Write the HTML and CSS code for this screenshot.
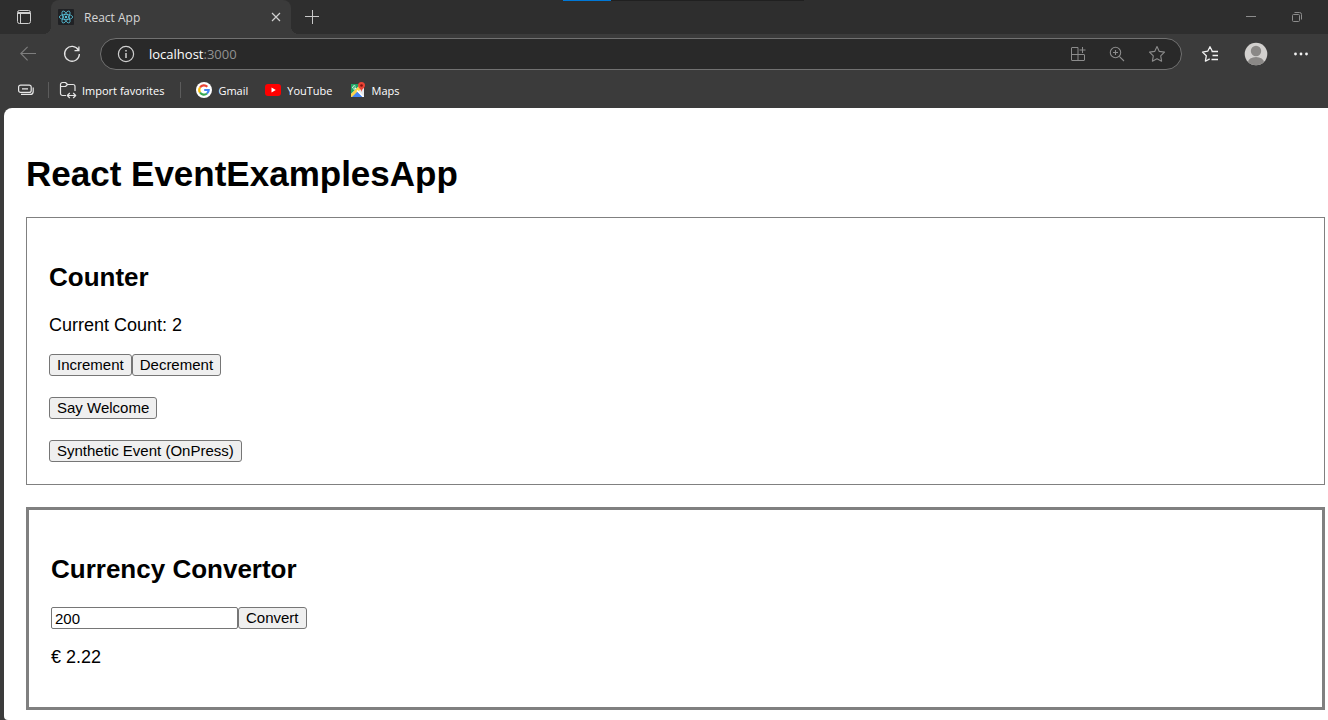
FILE: index.html
```html
<!DOCTYPE html>
<html lang="en">
<head>
<meta charset="utf-8">
<title>React App</title>
<link rel="stylesheet" href="styles.css">
</head>
<body>
<header class="browser">
  <div class="tabstrip">
    <div class="progress"><div class="progress-bar"></div></div>
    <button class="icon-btn tab-actions" aria-label="Tab actions">
      <svg width="16" height="16" viewBox="0 0 16 16" fill="none" stroke="#d0d0d0"><rect x="1.5" y="1.5" width="13" height="13" rx="2"/><path d="M2 3.5h12M2 4.500h12M4.500 5v9"/></svg>
    </button>
    <div class="tab">
      <svg class="favicon" width="16" height="16" viewBox="0 0 16 16" fill="none" stroke="#58c4dc" stroke-width="0.8"><rect width="16" height="16" rx="1" fill="#202124" stroke="none"/><ellipse cx="8" cy="8" rx="6.7" ry="2.6"/><ellipse cx="8" cy="8" rx="6.7" ry="2.6" transform="rotate(60 8 8)"/><ellipse cx="8" cy="8" rx="6.7" ry="2.6" transform="rotate(120 8 8)"/><circle cx="8" cy="8" r="1.2" fill="#58c4dc" stroke="none"/></svg>
      <span class="tab-title">React App</span>
      <button class="icon-btn" aria-label="Close tab">
        <svg width="10" height="10" viewBox="0 0 10 10" fill="none" stroke="#d0d0d0" stroke-width="1.2"><path d="M1 1l8 8M9 1L1 9"/></svg>
      </button>
    </div>
    <button class="icon-btn new-tab" aria-label="New tab">
      <svg width="14" height="14" viewBox="0 0 14 14" fill="none" stroke="#c8c8c8"><path d="M7.5 0v14M0 6.5h14"/></svg>
    </button>
    <div class="window-controls">
      <button class="icon-btn" aria-label="Minimize">
        <svg width="10" height="10" viewBox="0 0 10 10" fill="none" stroke="#8c8c8c"><path d="M0 4.5h10"/></svg>
      </button>
      <button class="icon-btn" aria-label="Restore">
        <svg width="10" height="10" viewBox="0 0 10 10" fill="none" stroke="#8c8c8c"><rect x=".5" y="2.5" width="7" height="7" rx="1"/><path d="M2.5.5h5a2 2 0 0 1 2 2v5"/></svg>
      </button>
    </div>
  </div>

  <div class="toolbar">
    <button class="icon-btn back" aria-label="Back">
      <svg width="16" height="16" viewBox="0 0 16 16" fill="none" stroke="#7e7e7e" stroke-width="1.1"><path d="M16 7.5H.8M7.6.8L.8 7.5l6.8 6.8"/></svg>
    </button>
    <button class="icon-btn reload" aria-label="Refresh">
      <svg width="18" height="18" viewBox="0 0 18 18" fill="none" stroke="#e4e4e4" stroke-width="1.3"><path d="M15.4 5.1A7.4 7.4 0 1 0 16.4 9M15.9 1.4v4.3h-4.4"/></svg>
    </button>
    <div class="address">
      <svg width="18" height="18" viewBox="0 0 18 18" fill="none" stroke="#d0d0d0"><circle cx="9" cy="9" r="7.6" stroke-width="1.2"/><path d="M9 8v5M9 5v1.5" stroke-width="1.5"/></svg>
      <div class="url">localhost<span class="port">:3000</span></div>
      <div class="address-actions">
        <button class="icon-btn" aria-label="Install app">
          <svg width="16" height="16" viewBox="0 0 16 16" fill="none" stroke="#8c8c8c"><path d="M8 1.500H2a.5.5 0 0 0-.5.5v12a.5.5 0 0 0 .5.5h12a.5.5 0 0 0 .5-.5V9a.5.5 0 0 0-.5-.5H1.500M8 1.500V14.500M12.500 1v6M9.500 4h6"/></svg>
        </button>
        <button class="icon-btn" aria-label="Zoom">
          <svg width="16" height="16" viewBox="0 0 16 16" fill="none" stroke="#8c8c8c" stroke-width="1.1"><circle cx="6.500" cy="6.500" r="5.200"/><path d="M10.300 10.300l4.700 4.700M6.500 4v5M4 6.500h5"/></svg>
        </button>
        <button class="icon-btn" aria-label="Add to favorites">
          <svg width="18" height="18" viewBox="0 0 18 18" fill="none" stroke="#8c8c8c" stroke-width="1.100" stroke-linejoin="round"><path d="M9 1.500l2.300 4.900 5.200.700-3.800 3.700.900 5.400L9 13.700l-4.600 2.500.900-5.400-3.800-3.700 5.200-.700z"/></svg>
        </button>
      </div>
    </div>
    <div class="toolbar-actions">
      <button class="icon-btn" aria-label="Favorites">
        <svg width="18" height="18" viewBox="0 0 18 18" fill="none" stroke="#f2f2f2" stroke-width="1.300" stroke-linejoin="round"><path d="M16 6.600l-4.700-.400L9 1.700 6.700 6.200l-5.200.900 3.800 3.700-.900 5.400 4.300-2.300M10.500 6.500H17M11.500 10.500H17M10.500 14.500H17"/></svg>
      </button>
      <button class="icon-btn" aria-label="Profile">
        <svg width="24" height="24" viewBox="0 0 24 24"><defs><clipPath id="avatar"><circle cx="12" cy="12" r="11.300"/></clipPath></defs><g clip-path="url(#avatar)"><path d="M0 0h24v24H0z" fill="#d2d0ce"/><circle cx="12" cy="9" r="5.200" fill="#8a8886"/><ellipse cx="12" cy="20.500" rx="8" ry="5.500" fill="#8a8886"/></g></svg>
      </button>
      <button class="icon-btn" aria-label="Settings and more">
        <svg width="16" height="16" viewBox="0 0 16 16" fill="#f2f2f2"><circle cx="2.500" cy="8" r="1.400"/><circle cx="8" cy="8" r="1.400"/><circle cx="13.500" cy="8" r="1.400"/></svg>
      </button>
    </div>
  </div>

  <nav class="favorites" aria-label="Favorites bar">
    <button class="icon-btn collections" aria-label="Saved tabs">
      <svg width="16" height="12" viewBox="0 0 16 12" fill="none" stroke="#e8e8e8" stroke-width="1.200"><rect x=".600" y="1.100" width="12.600" height="7.300" rx="2"/><path d="M4 4.800h6M3 10.400h9.200a3 3 0 0 0 3-3V3.500"/></svg>
    </button>
    <span class="divider"></span>
    <a class="favorite import" href="#">
      <svg width="18" height="18" viewBox="0 0 18 18" fill="none" stroke="#e4e4e4" stroke-width="1.200" stroke-linejoin="round"><path d="M7 14.500H3.500a2 2 0 0 1-2-2V3.500a2 2 0 0 1 2-2h3l2 2h5.500a2 2 0 0 1 2 2V10M1.500 5.500h5l2-2M8.500 14.500h8M10.800 12l-2.500 2.500 2.500 2.500M14.200 12l2.500 2.500-2.500 2.500"/></svg>
      <span>Import favorites</span>
    </a>
    <span class="divider"></span>
    <a class="favorite gmail" href="#">
      <svg width="16" height="16" viewBox="0 0 16 16" fill="none" stroke-width="2.200"><circle cx="8" cy="8" r="8" fill="#fff"/><path d="M11.300 4.700A4.700 4.700 0 0 0 4 5.500" stroke="#ea4335"/><path d="M4 5.500a4.700 4.700 0 0 0 0 5" stroke="#fbbc05"/><path d="M4 10.500a4.700 4.700 0 0 0 7 1" stroke="#34a853"/><path d="M11 11.500A4.700 4.700 0 0 0 12.700 8H8.200" stroke="#4285f4"/></svg>
      <span>Gmail</span>
    </a>
    <a class="favorite youtube" href="#">
      <svg width="16" height="16" viewBox="0 0 16 16"><rect y="2" width="16" height="12" rx="3" fill="#f00"/><path d="M6.500 5.500v5l4.300-2.500z" fill="#fff"/></svg>
      <span>YouTube</span>
    </a>
    <a class="favorite maps" href="#">
      <svg width="16" height="16" viewBox="0 0 16 16"><path d="M1 2h13v13H1z" fill="#e8eaed"/><path d="M1 2h10L1 12z" fill="#1fa463"/><path d="M1 12L11 2l2 3L2.500 15H1z" fill="#fdd34b"/><path d="M2 15l5.500-5.500L13 15z" fill="#4285f4"/><path d="M7.500 8L14 14.500V15h-1.500L6.500 9z" fill="#fff"/><path d="M5.500 4.200A1.700 1.700 0 1 0 6 6H4.300" fill="none" stroke="#fff" stroke-width=".900"/><path d="M11.500 0A3.500 3.500 0 0 0 8 3.500C8 6 11 6.500 11.500 10c.500-3.500 3.500-4 3.500-6.500A3.500 3.500 0 0 0 11.500 0z" fill="#ea4335"/><circle cx="11.500" cy="3.500" r="1.300" fill="#811411"/></svg>
      <span>Maps</span>
    </a>
  </nav>
</header>

<main class="page">
  <h1 class="title">React EventExamplesApp</h1>
  <section class="panel">
    <h2 class="heading">Counter</h2>
    <p class="text">Current Count: 2</p>
    <div class="actions">
      <div class="row"><button class="btn">Increment</button><button class="btn">Decrement</button></div>
      <div class="row"><button class="btn">Say Welcome</button></div>
      <div class="row"><button class="btn">Synthetic Event (OnPress)</button></div>
    </div>
  </section>
  <section class="panel panel-thick">
    <h2 class="heading">Currency Convertor</h2>
    <form class="row">
      <input class="amount" type="text" value="200" aria-label="Amount">
      <button class="btn" type="button">Convert</button>
    </form>
    <p class="text result">€ 2.22</p>
  </section>
</main>
</body>
</html>
```

FILE: styles.css
```css
* {
  box-sizing: border-box;
}

body {
  margin: 0;
  min-height: 100vh;
  display: flex;
  flex-direction: column;
  background: #3b3b3b;
  font-family: "Liberation Sans", Arial, sans-serif;
}

svg {
  display: block;
  flex: none;
}

.browser {
  font-family: "Open Sans", "Segoe UI", sans-serif;
  font-size: 12px;
  color: #fff;
}

.icon-btn {
  display: flex;
  padding: 0;
  border: 0;
  background: none;
}

.tabstrip {
  position: relative;
  display: flex;
  align-items: center;
  height: 34px;
  background: #2e2e2e;
}

.progress {
  position: absolute;
  top: 0;
  left: 563px;
  width: 241px;
  height: 1px;
  background: #202020;
}

.progress-bar {
  width: 20%;
  height: 100%;
  background: #0078d7;
}

.tab-actions {
  margin: 0 19px 0 16px;
}

.tab {
  position: relative;
  display: flex;
  align-items: center;
  width: 240px;
  height: 34px;
  padding: 0 10px 0 7px;
  border-radius: 8px 8px 0 0;
  background: #3b3b3b;
}

.tab::before,
.tab::after {
  content: "";
  position: absolute;
  bottom: 0;
  width: 8px;
  height: 8px;
}

.tab::before {
  right: 100%;
  background: radial-gradient(circle at 0 0, #2e2e2e 8px, #3b3b3b 8px);
}

.tab::after {
  left: 100%;
  background: radial-gradient(circle at 100% 0, #2e2e2e 8px, #3b3b3b 8px);
}

.tab-title {
  flex: 1;
  margin-left: 10px;
  color: #d6d6d6;
}

.new-tab {
  margin-left: 14px;
}

.window-controls {
  display: flex;
  gap: 36px;
  margin-left: auto;
  padding-right: 26px;
}

.toolbar {
  display: flex;
  align-items: center;
  height: 40px;
}

.back {
  margin-left: 20px;
}

.reload {
  margin: 0 19px 0 27px;
}

.address {
  flex: 1;
  display: flex;
  align-items: center;
  height: 32px;
  padding: 0 15px 0 16px;
  border: 1px solid #717171;
  border-radius: 16px;
  background: #292929;
}

.url {
  flex: 1;
  margin-left: 14px;
  font-size: 13px;
}

.port {
  color: #929292;
}

.address-actions {
  display: flex;
  align-items: center;
  gap: 23px;
}

.toolbar-actions {
  display: flex;
  align-items: center;
  gap: 25px;
  padding: 0 19px;
}

.favorites {
  display: flex;
  align-items: center;
  height: 34px;
  padding: 0 18px 2px;
  font-size: 11px;
}

.divider {
  width: 1px;
  height: 16px;
  margin: 0 15px 0 14px;
  background: #5c5c5c;
}

.favorite {
  display: flex;
  align-items: center;
  gap: 6px;
  color: #fff;
  text-decoration: none;
}

.import {
  gap: 5px;
  margin-left: -5px;
  padding-right: 2px;
}

.youtube,
.maps {
  margin-left: 17px;
}

.page {
  flex: 1;
  margin-left: 4px;
  padding: 46px 3px 10px 22px;
  border-radius: 8px 0 0 4px;
  background: #fff;
  color: #000;
}

.title {
  margin: 0 0 23px;
  font-size: 35px;
  line-height: 40px;
}

.panel {
  margin-bottom: 22px;
  padding: 44px 22px 22px;
  border: 1px solid #808080;
}

.panel-thick {
  margin-bottom: 0;
  border-width: 3px;
}

.heading {
  margin: 0 0 23px;
  font-size: 26px;
  line-height: 30px;
}

.text {
  margin: 0 0 19px;
  font-size: 18px;
  line-height: 20px;
}

.result {
  margin: 18px 0;
}

.actions {
  display: flex;
  flex-direction: column;
  gap: 21px;
}

.row {
  display: flex;
}

.btn {
  height: 22px;
  padding: 0 7px;
  border: 1px solid #767676;
  border-radius: 3px;
  background: #efefef;
  color: #000;
  font: 15px/18px "Liberation Sans", Arial, sans-serif;
}

.amount {
  width: 187px;
  height: 22px;
  padding: 0 3px;
  border: 1px solid #767676;
  border-radius: 2px;
  background: #fff;
  color: #000;
  font: 15px/18px "Liberation Sans", Arial, sans-serif;
}
```
